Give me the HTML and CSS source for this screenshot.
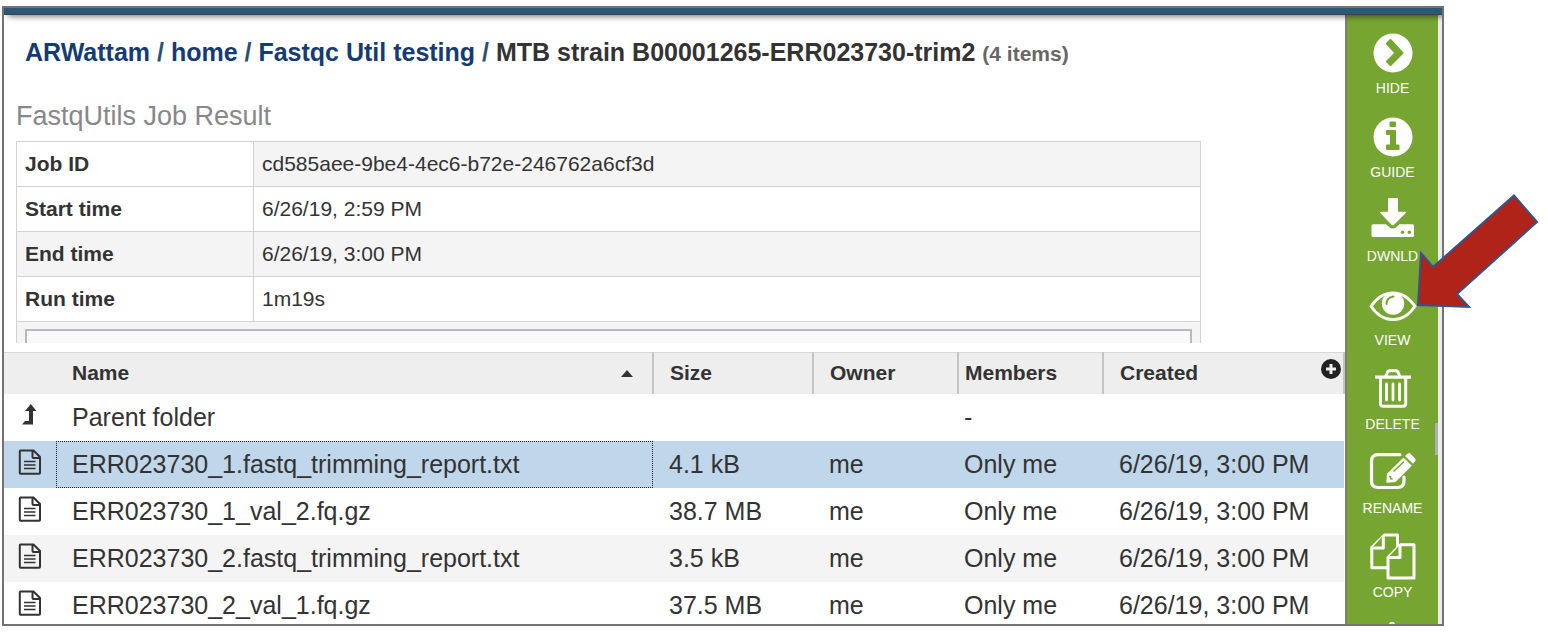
FILE: index.html
```html
<!DOCTYPE html>
<html lang="en">
<head>
<meta charset="utf-8">
<title>FastqUtils Job Result</title>
<link rel="stylesheet" href="styles.css">
</head>
<body>
<div class="window">
  <div class="topbar"></div>
  <div class="workspace">
    <main class="content">
      <nav class="breadcrumb" aria-label="Path">
        <a href="#">ARWattam</a> <span class="sep">/</span> <a href="#">home</a> <span class="sep">/</span> <a href="#">Fastqc Util testing</a> <span class="sep">/</span> <span>MTB strain B00001265-ERR023730-trim2</span> <span class="count">(4 items)</span>
      </nav>
      <section class="job">
        <h1 class="job-title">FastqUtils Job Result</h1>
        <table class="job-table">
          <tbody>
            <tr><th scope="row">Job ID</th><td class="shade">cd585aee-9be4-4ec6-b72e-246762a6cf3d</td></tr>
            <tr><th scope="row">Start time</th><td>6/26/19, 2:59 PM</td></tr>
            <tr class="shade"><th scope="row">End time</th><td>6/26/19, 3:00 PM</td></tr>
            <tr><th scope="row">Run time</th><td>1m19s</td></tr>
            <tr class="shade"><td colspan="2" class="params"><div class="params-box"></div></td></tr>
          </tbody>
        </table>
      </section>
      <section class="files">
        <table class="grid">
          <colgroup><col class="c-icon"><col><col class="c-size"><col class="c-owner"><col class="c-members"><col class="c-created"></colgroup>
          <thead>
            <tr>
              <th></th>
              <th class="line"><div class="head">Name<svg class="sort" viewBox="0 0 12 7"><path d="M6 0 12 7H0z"/></svg></div></th>
              <th class="line">Size</th>
              <th class="line">Owner</th>
              <th class="line members">Members</th>
              <th class="line last">
                <div class="head">Created<button class="add" aria-label="Choose columns"><svg viewBox="0 0 20 20"><circle cx="10" cy="10" r="10"/><path d="M10 5v10M5 10h10" stroke="#eee" stroke-width="3"/></svg></button></div>
              </th>
            </tr>
          </thead>
          <tbody>
            <tr>
              <td class="icon"><svg viewBox="0 0 24 26"><path d="M4 22.500 7 19h4V9H7l5.800-7L18.500 9H15v13.500z"/></svg></td>
              <td>Parent folder</td><td></td><td></td><td class="members">-</td><td></td>
            </tr>
            <tr class="selected">
              <td class="icon"><svg viewBox="0 0 24 26"><use href="#doc"/></svg></td>
              <td class="focus">ERR023730_1.fastq_trimming_report.txt</td><td>4.1 kB</td><td>me</td><td class="members">Only me</td><td>6/26/19, 3:00 PM</td>
            </tr>
            <tr>
              <td class="icon"><svg viewBox="0 0 24 26"><use href="#doc"/></svg></td>
              <td>ERR023730_1_val_2.fq.gz</td><td>38.7 MB</td><td>me</td><td class="members">Only me</td><td>6/26/19, 3:00 PM</td>
            </tr>
            <tr class="shade">
              <td class="icon"><svg viewBox="0 0 24 26"><use href="#doc"/></svg></td>
              <td>ERR023730_2.fastq_trimming_report.txt</td><td>3.5 kB</td><td>me</td><td class="members">Only me</td><td>6/26/19, 3:00 PM</td>
            </tr>
            <tr>
              <td class="icon"><svg viewBox="0 0 24 26"><use href="#doc"/></svg></td>
              <td>ERR023730_2_val_1.fq.gz</td><td>37.5 MB</td><td>me</td><td class="members">Only me</td><td>6/26/19, 3:00 PM</td>
            </tr>
          </tbody>
        </table>
      </section>
    </main>
    <aside class="actions">
      <button class="action">
        <svg viewBox="0 0 48 48"><circle cx="24" cy="24" r="19.500" fill="#fff"/><path d="M21.500 11 18 14.500 26.500 24 18 32.500 21.500 36 33.500 24z" fill="#76a532" stroke="#76a532" stroke-width="2" stroke-linejoin="round"/></svg>
        <span>HIDE</span>
      </button>
      <button class="action">
        <svg viewBox="0 0 48 48"><circle cx="24" cy="24" r="19.500" fill="#fff"/><g fill="#76a532"><rect x="20.500" y="8.500" width="6.500" height="5.500" rx="1"/><path d="M18 17h8q1 0 1 1v13.500h2.500q1 0 1 1V36q0 1-1 1H18q-1 0-1-1v-3.500q0-1 1-1h3V22h-3q-1 0-1-1v-3q0-1 1-1z"/></g></svg>
        <span>GUIDE</span>
      </button>
      <button class="action">
        <svg viewBox="0 0 48 48"><g fill="#fff"><path d="M20 1h8q1 0 1 1v12.700h7q2 0 .5 1.500L25 27.700q-1.200 1-2.400 0L11.500 16.200Q10 14.700 12 14.700h7V2q0-1 1-1z"/><path d="M4 27.300h13l4 3.400q2.800 1.600 5.600 0l4-3.400h12.900q1.500 0 1.500 1.500v9.700q0 1.500-1.500 1.500H4q-1.500 0-1.500-1.500v-9.700q0-1.500 1.500-1.500z"/></g><g fill="#76a532"><circle cx="33.500" cy="35.300" r="1.700"/><circle cx="40.300" cy="35.300" r="1.700"/></g></svg>
        <span>DWNLD</span>
      </button>
      <button class="action">
        <svg viewBox="0 0 48 48"><path d="M2 25.200Q11 11.800 24 11.800T46 25.200Q37 38.600 24 38.600T2 25.200z" fill="none" stroke="#fff" stroke-width="2.800"/><circle cx="24" cy="22.500" r="11.200" fill="#fff"/><path d="M17.500 23q0-6.500 7-7.500" fill="none" stroke="#76a532" stroke-width="2" stroke-linecap="round"/></svg>
        <span>VIEW</span>
      </button>
      <button class="action">
        <svg viewBox="0 0 48 48"><g fill="none" stroke="#fff" stroke-width="3"><path d="M6 12.200h36" stroke-width="3.200"/><path d="M16.500 12l2-5q.6-1.300 2-1.300h6.500q1.400 0 2 1.300l2 5M11.500 13v25.500q0 2.700 2.700 2.700h20q2.500 0 2.500-2.700V13"/><path d="M17.500 19v16M24 19v16M30.500 19v16" stroke-linecap="round" stroke-width="2.800"/></g></svg>
        <span>DELETE</span>
      </button>
      <button class="action">
        <svg viewBox="0 0 48 48"><path d="M31 5.700H9Q2.500 5.700 2.500 12v20Q2.500 38.500 9 38.500h19.500q6.500 0 6.500-6.500v-4" fill="none" stroke="#fff" stroke-width="3.200" stroke-linecap="round"/><path d="M17.300 33.800l.7-9L34.500 8.500l8.300 8.200L26.500 33z" fill="#fff"/><path d="M36 7l2.800-2.500q1.200-1 2.400 0l5 5q1 1.200 0 2.400L44 14.800z" fill="#fff"/><path d="M24.500 22.500 35 12.500M20 27.500l1.500.3.200 2 2 .3" fill="none" stroke="#76a532" stroke-width="1.500"/></svg>
        <span>RENAME</span>
      </button>
      <button class="action">
        <svg viewBox="0 0 48 48"><g fill="#76a532" stroke="#fff" stroke-width="3" stroke-linejoin="round"><path d="M2.800 34.800V14.500L15.500 2h13v32.800z"/><path d="M2.800 15h11.500V2.500"/><path d="M19 45V24.500L31.500 11.800H45V45z"/><path d="M19 24.500h12V12"/></g></svg>
        <span>COPY</span>
      </button>
      <button class="action" aria-label="More">
        <svg viewBox="0 0 48 48"><circle cx="23" cy="8" r="3.200" fill="#fff"/></svg>
      </button>
      <div class="thumb"></div>
    </aside>
  </div>
</div>
<svg class="pointer" viewBox="0 0 124 116"><path d="M3 111 6 59 18 73 99 1.500 122 28 42 100 54 113z" fill="#b02318" stroke="#34538c" stroke-width="2"/></svg>
<svg class="defs" aria-hidden="true"><defs><g id="doc" fill="none" stroke="#333" stroke-width="2"><path d="M2.500 1.500h13L22 8v16q0 .7-.7.7H2.500q-.7 0-.7-.7V2.200q0-.7.700-.7zM14.500 1.500V8q0 1 1 1H22"/><path d="M6 12.500h11.500M6 16h11.500M6 19.500h11.500" stroke-width="1.700"/></g></defs></svg>
</body>
</html>
```
FILE: styles.css
```css
* { box-sizing: border-box; }
body {
  margin: 0;
  padding: 6px 104px 6px 2px;
  height: 100vh;
  position: relative;
  overflow: hidden;
  background: #fff;
  color: #333;
  font-family: "Liberation Sans", Arial, sans-serif;
}
button { border: 0; padding: 0; background: none; font: inherit; color: inherit; }
table { border-collapse: collapse; table-layout: fixed; }
th { text-align: left; }

.window {
  height: 100%;
  display: flex;
  flex-direction: column;
  border: 2px solid #767171;
  overflow: hidden;
}
.topbar {
  flex: 0 0 7px;
  background: #2a5876;
  border-bottom: 1px solid #433f48;
  box-shadow: 4px 1px 6px rgba(0, 0, 0, .6);
  z-index: 1;
}
.workspace { flex: 1; min-height: 0; display: flex; }
.content { flex: 1; min-width: 0; display: flex; flex-direction: column; }

.breadcrumb {
  padding: 22px 21px 0;
  font-size: 25px;
  line-height: 30px;
  font-weight: bold;
  white-space: nowrap;
}
.breadcrumb a { color: #143b74; text-decoration: none; }
.sep { color: #2b4f70; }
.count { font-size: 21px; color: #666; }

.job { flex: 1; min-height: 0; padding: 30px 0 0 12px; overflow: hidden; }
.job-title { margin: 0 0 8px; font-size: 27px; line-height: 34px; font-weight: normal; color: #888; }
.job-table { width: calc(100% - 144px); font-size: 21px; line-height: 28px; }
.job-table th, .job-table td { height: 45px; padding: 8px; border: 1px solid #d3d3d3; }
.job-table th { width: 237px; }
.job-table .params { padding: 7px 8px 0; }
.params-box { height: 48px; border: 2px solid #b4bac2; background: #f9f9f9; }
.shade { background: #f4f4f4; }

.files { flex: 0 0 272px; margin-top: 9px; overflow: hidden; }
.grid { width: 100%; font-size: 25px; line-height: 30px; }
.grid th, .grid td { height: 47px; padding: 0 0 0 16px; white-space: nowrap; }
.grid th {
  height: 41px;
  background: #eee;
  border-top: 1px solid #d8d8d8;
  font-size: 21px;
}
.grid th.line { border-right: 2px solid #c4c4c4; }
.grid .members { padding-left: 6px; }
.c-icon { width: 52px; }
.c-size { width: 160px; }
.c-owner { width: 145px; }
.c-members { width: 145px; }
.c-created { width: 241px; }
.head { display: flex; align-items: center; justify-content: space-between; }
.sort { width: 12px; height: 7px; margin-right: 19px; fill: #333; }
.add { width: 20px; height: 20px; margin: 0 2px 8px 0; }
.add svg { display: block; fill: #222; }
.grid td.icon { padding: 0 0 4px 14px; }
.icon svg { display: block; width: 24px; height: 26px; fill: #333; }
.selected { background: #bfd6eb; }
.focus { outline: 1px dotted #222; outline-offset: -1px; }

.actions {
  flex: 0 0 97px;
  position: relative;
  padding-top: 7px;
  overflow: hidden;
  background: #76a532;
  border-left: 2px solid #7b7f77;
  border-right: 4px solid #ececec;
}
.action {
  display: flex;
  flex-direction: column;
  align-items: center;
  width: 100%;
  height: 84px;
  padding-top: 7px;
  color: #fff;
  font-size: 14px;
  line-height: 16px;
}
.action svg { width: 48px; height: 48px; flex: none; margin-bottom: 3px; }
.thumb { position: absolute; right: 0; top: 408px; width: 3px; height: 32px; background: #a9b3b5; }

.pointer { position: absolute; right: 9px; top: 194px; width: 124px; height: 116px; }
.defs { position: absolute; width: 0; height: 0; }
```
